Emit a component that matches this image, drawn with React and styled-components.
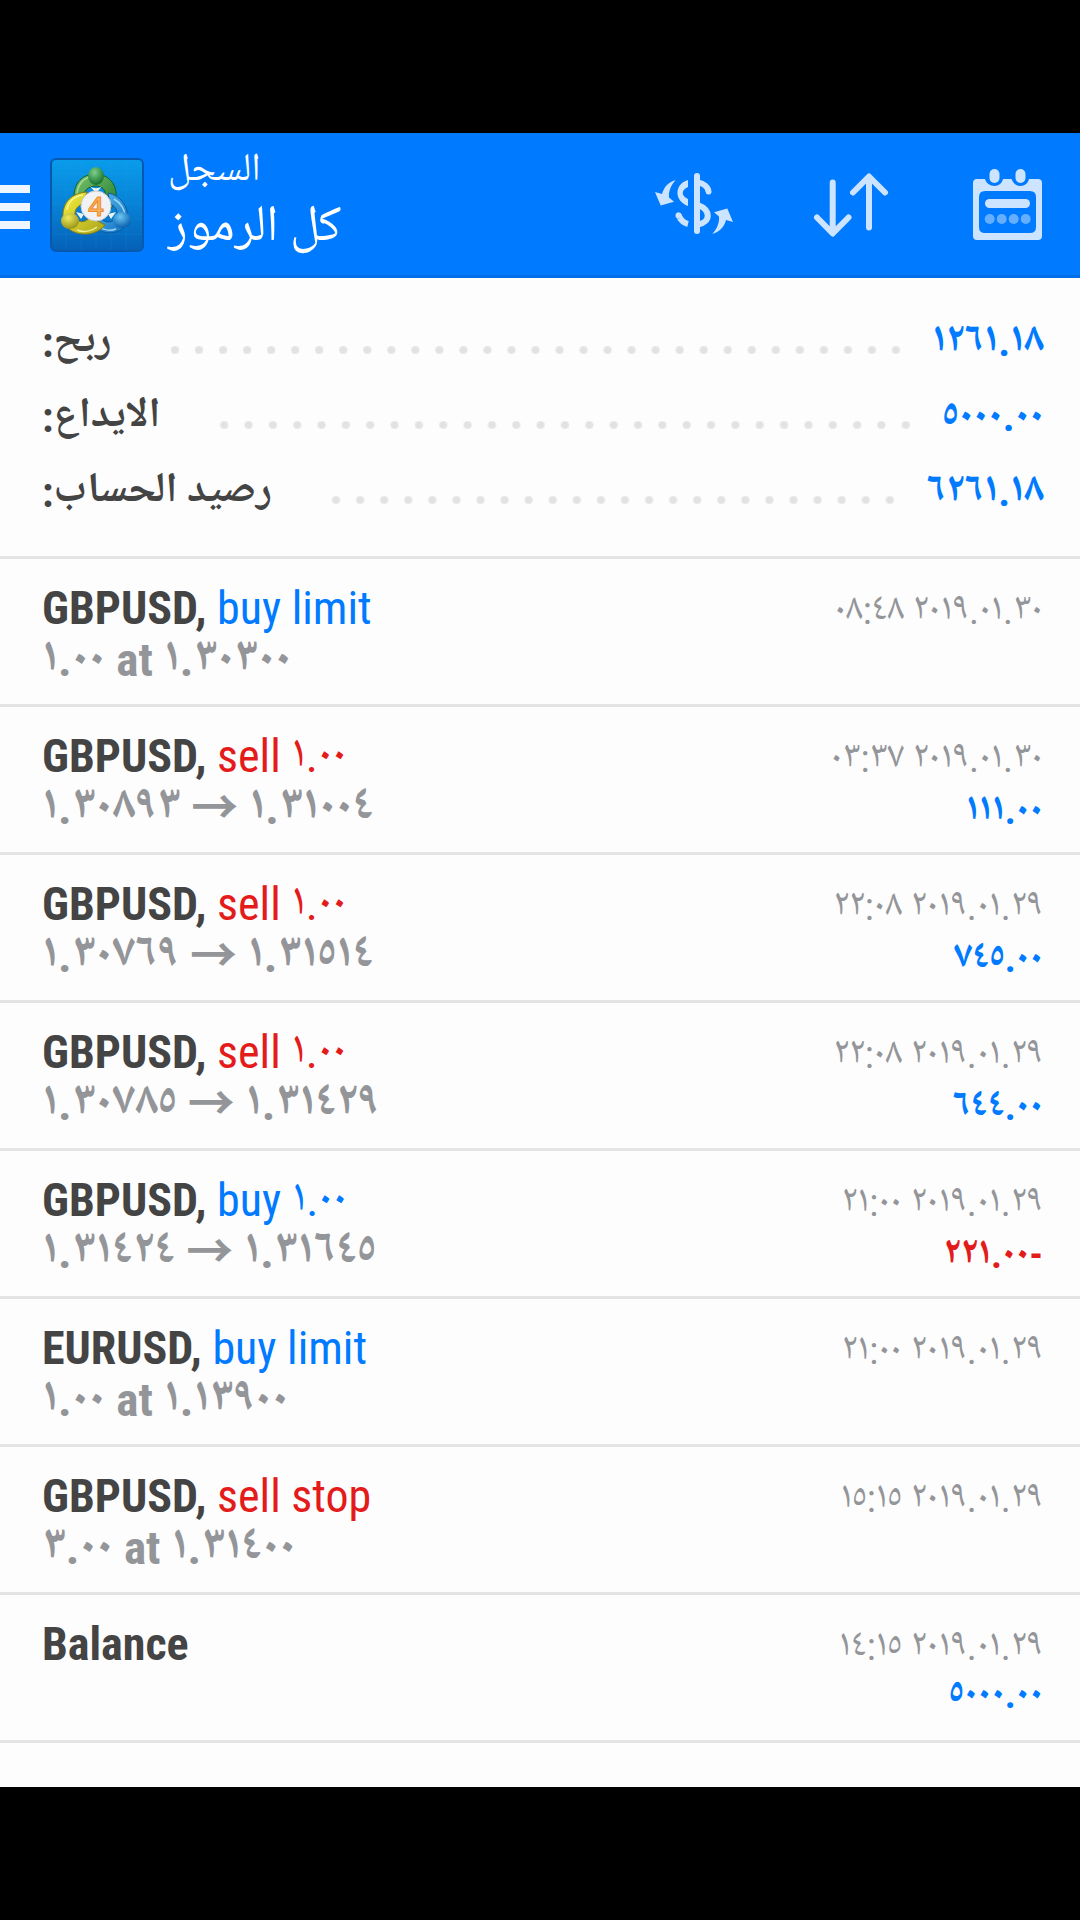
import React from "react"
import styled, { createGlobalStyle } from "styled-components";

const summary = [
  { label: "ربح:", value: "١٢٦١.١٨" },
  { label: "الايداع:", value: "٥٠٠٠.٠٠" },
  { label: "رصيد الحساب:", value: "٦٢٦١.١٨" },
];

// prices are kept in open -> close order, the bidi algorithm lays them out
const deals = [
  { id: 1, symbol: "GBPUSD,", side: "buy", action: "buy limit", volume: "١.٠٠", at: "١.٣٠٣٠٠", time: "٢٠١٩.٠١.٣٠ ٠٨:٤٨" },
  { id: 2, symbol: "GBPUSD,", side: "sell", action: "sell ١.٠٠", open: "١.٣١٠٠٤", close: "١.٣٠٨٩٣", time: "٢٠١٩.٠١.٣٠ ٠٣:٣٧", profit: "١١١.٠٠" },
  { id: 3, symbol: "GBPUSD,", side: "sell", action: "sell ١.٠٠", open: "١.٣١٥١٤", close: "١.٣٠٧٦٩", time: "٢٠١٩.٠١.٢٩ ٢٢:٠٨", profit: "٧٤٥.٠٠" },
  { id: 4, symbol: "GBPUSD,", side: "sell", action: "sell ١.٠٠", open: "١.٣١٤٢٩", close: "١.٣٠٧٨٥", time: "٢٠١٩.٠١.٢٩ ٢٢:٠٨", profit: "٦٤٤.٠٠" },
  { id: 5, symbol: "GBPUSD,", side: "buy", action: "buy ١.٠٠", open: "١.٣١٦٤٥", close: "١.٣١٤٢٤", time: "٢٠١٩.٠١.٢٩ ٢١:٠٠", profit: "-٢٢١.٠٠", loss: true },
  { id: 6, symbol: "EURUSD,", side: "buy", action: "buy limit", volume: "١.٠٠", at: "١.١٣٩٠٠", time: "٢٠١٩.٠١.٢٩ ٢١:٠٠" },
  { id: 7, symbol: "GBPUSD,", side: "sell", action: "sell stop", volume: "٣.٠٠", at: "١.٣١٤٠٠", time: "٢٠١٩.٠١.٢٩ ١٥:١٥" },
  { id: 8, symbol: "Balance", time: "٢٠١٩.٠١.٢٩ ١٤:١٥", profit: "٥٠٠٠.٠٠" },
];

function Logo() {
  return (
    <LogoTile width="94" height="94" viewBox="0 0 94 94" aria-hidden="true">
      <defs>
        <linearGradient id="tile" x1="0" y1="0" x2="0" y2="1">
          <stop offset="0" stopColor="#0a9ceb" />
          <stop offset="0.5" stopColor="#0782d6" />
          <stop offset="1" stopColor="#0560b6" />
        </linearGradient>
        <linearGradient id="green" x1="0" y1="0" x2="1" y2="1">
          <stop offset="0" stopColor="#7cc46c" />
          <stop offset="1" stopColor="#1c7a30" />
        </linearGradient>
        <linearGradient id="yellow" x1="0" y1="0" x2="1" y2="1">
          <stop offset="0" stopColor="#f6ee3c" />
          <stop offset="1" stopColor="#a9a41c" />
        </linearGradient>
        <linearGradient id="blue" x1="0" y1="0" x2="1" y2="1">
          <stop offset="0" stopColor="#5fc0f2" />
          <stop offset="1" stopColor="#1273c2" />
        </linearGradient>
        <radialGradient id="greenHead" cx="0.4" cy="0.3" r="0.7">
          <stop offset="0" stopColor="#7fd08a" />
          <stop offset="1" stopColor="#14712c" />
        </radialGradient>
        <radialGradient id="yellowHead" cx="0.4" cy="0.3" r="0.7">
          <stop offset="0" stopColor="#f0ea5c" />
          <stop offset="1" stopColor="#99941a" />
        </radialGradient>
        <radialGradient id="blueHead" cx="0.4" cy="0.3" r="0.7">
          <stop offset="0" stopColor="#6cc6f5" />
          <stop offset="1" stopColor="#0b62ae" />
        </radialGradient>
      </defs>
      <rect x="1" y="1" width="92" height="92" rx="5" fill="url(#tile)" stroke="#0659ae" strokeWidth="2" />
      <path d="M16 2V92M31 2V92M46 2V92M61 2V92M76 2V92M2 16H92M2 31H92M2 46H92M2 61H92M2 76H92" stroke="#2ba6ee" strokeWidth="1" opacity="0.15" />
      <path d="M24 41C23 25 33 16 45 16C58 16 67 26 66 38C65 46 61 52 56 55L53 42C58 35 54 28 46 28C38 28 33 33 34 40Z" fill="url(#green)" stroke="#145f2a" strokeWidth="1" />
      <path d="M27 38C27 27 33 20 41 19" fill="none" stroke="#b9e3ac" strokeWidth="1.5" opacity="0.8" />
      <path d="M58 35C70 37 78 48 78 60C77 72 64 77 54 74C44 71 38 64 37 59L50 60C56 66 64 65 67 58C68 52 65 48 60 46Z" fill="url(#blue)" stroke="#0b5aa3" strokeWidth="1" />
      <path d="M43 63C49 71 58 74 66 71M64 41C71 45 75 52 75 58" fill="none" stroke="#b5e2fa" strokeWidth="1.5" opacity="0.8" />
      <path d="M37 34C22 35 13 44 13 57C13 71 25 77 38 76C46 75 52 71 55 67L40 59C35 66 27 65 25 58C24 52 28 47 33 46Z" fill="url(#yellow)" stroke="#837d14" strokeWidth="1" />
      <path d="M17 52C18 43 25 38 33 37M27 72C34 75 42 73 47 69" fill="none" stroke="#fdfbb0" strokeWidth="1.5" opacity="0.8" />
      <path d="M40 28C43 31 49 31 52 28L48 33H44ZM26 54L34 56L31 61ZM66 54L58 56L61 61Z" fill="#e9f3ee" />
      <ellipse cx="46" cy="18" rx="8" ry="9" fill="url(#greenHead)" />
      <ellipse cx="20" cy="63" rx="9" ry="8" fill="url(#yellowHead)" />
      <ellipse cx="72" cy="62" rx="9" ry="8" fill="url(#blueHead)" />
      <circle cx="46" cy="48" r="15" fill="#f1f2f5" stroke="#c9ccd0" strokeWidth="1" />
      <text x="46" y="58" textAnchor="middle" fontFamily="Open Sans, sans-serif" fontWeight="600" fontSize="27" fill="#fbb35c" stroke="#ee8a2d" strokeWidth="1">4</text>
    </LogoTile>
  );
}

function CurrencyIcon() {
  const arrow = "M21.7 16C12 19 9.5 25 8 30L1 28L6.7 41.5L20 37.7L15 33.5C14.5 27 17 21 21.7 16Z";
  return (
    <svg width="80" height="80" viewBox="0 0 80 80" fill="none" stroke="currentColor" strokeWidth="6" aria-hidden="true">
      <path d="M43 12V67" strokeLinecap="round" />
      <path d="M34 16C20 20 20 37 34 42V35C27 32 27 26 34 23Z" fill="currentColor" stroke="none" />
      <path d="M24.5 51.5C25 51 26 58 34 60" />
      <circle cx="24.5" cy="51.5" r="3" fill="currentColor" stroke="none" />
      <path d="M44 18.5C50 19.5 54 23 54.5 27.5" strokeLinecap="round" />
      <path d="M44 41C57 46 57 58 44 60.5" />
      <path d={arrow} fill="currentColor" stroke="none" />
      <path d={arrow} fill="currentColor" stroke="none" transform="rotate(180 40 43)" />
    </svg>
  );
}

function SortIcon() {
  return (
    <svg width="80" height="80" viewBox="0 0 80 80" fill="none" stroke="currentColor" strokeWidth="6" strokeLinecap="round" strokeLinejoin="round" aria-hidden="true">
      <path d="M21.7 18.5V69M6 53.5L21.7 69.5L37.5 53.5" />
      <path d="M58 63.5V13M42 28.5L58 12.5L74 28.5" />
    </svg>
  );
}

function CalendarIcon() {
  return (
    <svg width="80" height="80" viewBox="0 0 80 80" fill="currentColor" aria-hidden="true">
      <path
        fillRule="evenodd"
        d="M9 15H17C18 19 22 22 26.5 22C31 22 34 19 35 15H43.5C45 19 48 22 52.5 22C57 22 60 19 61 15H70Q74 15 74 19V72Q74 76 70 76H9Q5 76 5 72V19Q5 15 9 15ZM17 27Q11 27 11 33V63Q11 69 17 69H62Q68 69 68 63V33Q68 27 62 27Z"
      />
      <rect x="21.5" y="5" width="10" height="14" rx="5" />
      <rect x="47.5" y="5" width="10" height="14" rx="5" />
      <rect x="17" y="35" width="45" height="9" rx="4.5" />
      <g opacity="0.5">
        <circle cx="21.7" cy="55" r="5" />
        <circle cx="33.7" cy="55" r="5" />
        <circle cx="45.7" cy="55" r="5" />
        <circle cx="57.7" cy="55" r="5" />
      </g>
    </svg>
  );
}

function Deal( { symbol , side , action , volume , at , open , close , time , profit , loss } ) {

  return (
    <DealRow>
      <Title>
        <b>{symbol}</b> {action && <Action $side={side}>{action}</Action>}
      </Title>
      <Time dir="rtl">{time}</Time>
      <Prices>
        {at && <>{volume} at {at}</>}
        {open && <>{open} <Arrow>→</Arrow> {close}</>}
      </Prices>
      {profit && <Profit dir="rtl" $loss={loss}>{profit}</Profit>}
    </DealRow>
  );
}

function App() {
  return (
    <Page>
      <GlobalStyle />
      <Header>
        <MenuButton aria-label="Menu">
          <span />
          <span />
          <span />
        </MenuButton>
        <Logo />
        <Heading dir="rtl">
          <small>السجل</small>
          <h1>كل الرموز</h1>
        </Heading>
        <Actions>
          <IconButton aria-label="Symbols"><CurrencyIcon /></IconButton>
          <IconButton aria-label="Sort"><SortIcon /></IconButton>
          <IconButton aria-label="Period"><CalendarIcon /></IconButton>
        </Actions>
      </Header>
      <Content>
        <Summary>
          {summary.map((item) => (
            <SummaryRow key={item.label}>
              <dt dir="rtl">{item.label}</dt>
              <Dots />
              <dd>{item.value}</dd>
            </SummaryRow>
          ))}
        </Summary>
        <DealList>
          {deals.map((deal) => (
            <Deal key={deal.id} {...deal} />
          ))}
        </DealList>
      </Content>
    </Page>
  );
}

export default App;

const GlobalStyle = createGlobalStyle`
  * {
    box-sizing: border-box;
  }

  body {
    margin: 0;
    background: #000;
    font-family: "Roboto Condensed", "Noto Naskh Arabic UI", "DejaVu Sans", sans-serif;
  }
`;

const Page = styled.div`
  display: flex;
  flex-direction: column;
  min-height: 100vh;
  padding: 133px 0;
`;

const Header = styled.header`
  display: flex;
  align-items: center;
  height: 145px;
  padding-right: 32px;
  background: #007aff;
  border-bottom: 3px solid #006fe8;
  color: #fff;
`;

const MenuButton = styled.button`
  display: flex;
  flex-direction: column;
  gap: 10px;
  width: 30px;
  margin-right: 20px;
  padding: 6px 0 0;
  border: none;
  background: none;

  span {
    height: 8px;
    background: #eef6ff;
  }
`;

const LogoTile = styled.svg`
  margin-top: 2px;
`;

const Heading = styled.div`
  margin-left: 24px;

  small,
  h1 {
    display: block;
    margin: 0;
    font-weight: 400;
    text-align: right;
  }

  small {
    font-size: 39px;
    line-height: 52px;
    text-align: left;
  }

  h1 {
    font-size: 51px;
    line-height: 64px;
  }
`;

const Actions = styled.div`
  display: flex;
  gap: 77px;
  margin-left: auto;
`;

const IconButton = styled.button`
  width: 80px;
  height: 80px;
  padding: 0;
  border: none;
  background: none;
  color: #cce4ff;
`;

const Content = styled.main`
  flex: 1;
  background: #fdfdfd;
`;

const Summary = styled.dl`
  margin: 0;
  padding: 27px 36px 26px 42px;
  border-bottom: 3px solid #e4e4e4;
`;

const SummaryRow = styled.div`
  display: flex;
  align-items: center;
  height: 75px;

  dt,
  dd {
    margin: 0;
    font-weight: 700;
    line-height: 75px;
  }

  dt {
    font-size: 42px;
    color: #444;
  }

  dd {
    font-size: 41px;
    color: #007aff;
  }
`;

const Dots = styled.div`
  flex: 1;
  height: 8px;
  margin: 14px 24px 0 52px;
  background: radial-gradient(circle, #e2e2e2 3px, transparent 5px) 0 0 / 24px 8px round;
`;

const DealList = styled.ul`
  margin: 0;
  padding: 0;
  list-style: none;
`;

const DealRow = styled.li`
  display: grid;
  grid-template-columns: 1fr auto;
  grid-template-rows: 51px 51px;
  align-items: baseline;
  height: 148px;
  padding: 24px 37px 0 42px;
  border-bottom: 3px solid #e4e4e4;
  line-height: 51px;
`;

const Title = styled.div`
  font-size: 46px;
  color: #444;
`;

const Action = styled.span`
  color: ${(props) => (props.$side === "buy" ? "#007aff" : "#e41b1b")};
`;

const Time = styled.time`
  font-size: 38px;
  color: #939599;
`;

const Prices = styled.div`
  font-size: 47px;
  font-weight: 700;
  color: #939599;
`;

const Arrow = styled.span`
  font-family: "Noto Sans CJK SC", sans-serif;
  line-height: 0;
`;

const Profit = styled.div`
  font-size: 38px;
  font-weight: 700;
  color: ${(props) => (props.$loss ? "#e41b1b" : "#007aff")};
`;
